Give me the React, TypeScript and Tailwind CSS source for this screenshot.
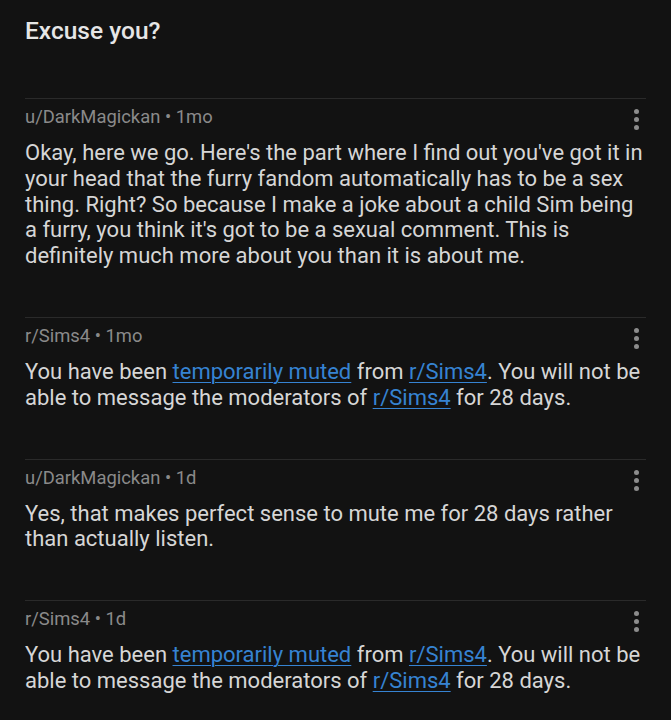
import { ReactNode } from "react";

type Msg = {
  author: string;
  age: string;
  body: ReactNode;
};

const Link = ({ children }: { children: ReactNode }) => (
  <span className="text-[#3683d2] underline decoration-1 underline-offset-[3px]">{children}</span>
);

const muted = (
  <>
    You have been <Link>temporarily muted</Link> from <Link>r/Sims4</Link>. You will not be able to
    message the moderators of <Link>r/Sims4</Link> for 28 days.
  </>
);

const messages: Msg[] = [
  {
    author: "u/DarkMagickan",
    age: "1mo",
    body: "Okay, here we go. Here's the part where I find out you've got it in your head that the furry fandom automatically has to be a sex thing. Right? So because I make a joke about a child Sim being a furry, you think it's got to be a sexual comment. This is definitely much more about you than it is about me.",
  },
  { author: "r/Sims4", age: "1mo", body: muted },
  {
    author: "u/DarkMagickan",
    age: "1d",
    body: "Yes, that makes perfect sense to mute me for 28 days rather than actually listen.",
  },
  { author: "r/Sims4", age: "1d", body: muted },
];

function Dots() {
  return (
    <div className="flex flex-col items-center gap-[3px] pt-[2px]">
      <span className="w-[5px] h-[5px] rounded-full bg-[#8c8c8c]" />
      <span className="w-[5px] h-[5px] rounded-full bg-[#8c8c8c]" />
      <span className="w-[5px] h-[5px] rounded-full bg-[#8c8c8c]" />
    </div>
  );
}

function Message({ msg }: { msg: Msg }) {
  return (
    <div className="border-t border-[#2a2a2a] pt-[6px] pb-[48px]">
      <div className="flex items-start justify-between">
        <p className="text-[18.4px] leading-[24px] text-[#8a8a8a]">
          {msg.author} • {msg.age}
        </p>
        <div className="mr-[7px] pt-[2px]">
          <Dots />
        </div>
      </div>
      <p className="mt-[10px] text-[22px] leading-[25.8px] text-[#d6d6d6]">{msg.body}</p>
    </div>
  );
}

export default function App() {
  return (
    <div
      className="min-h-screen bg-[#121212] px-[25px]"
      style={{ fontFamily: "Roboto, 'Noto Sans', sans-serif" }}
    >
      <h1 className="pt-[15px] pb-[51px] text-[24.5px] leading-[32px] font-medium text-[#e6e6e6]">
        Excuse you?
      </h1>
      {messages.map((m, i) => (
        <Message key={i} msg={m} />
      ))}
    </div>
  );
}
